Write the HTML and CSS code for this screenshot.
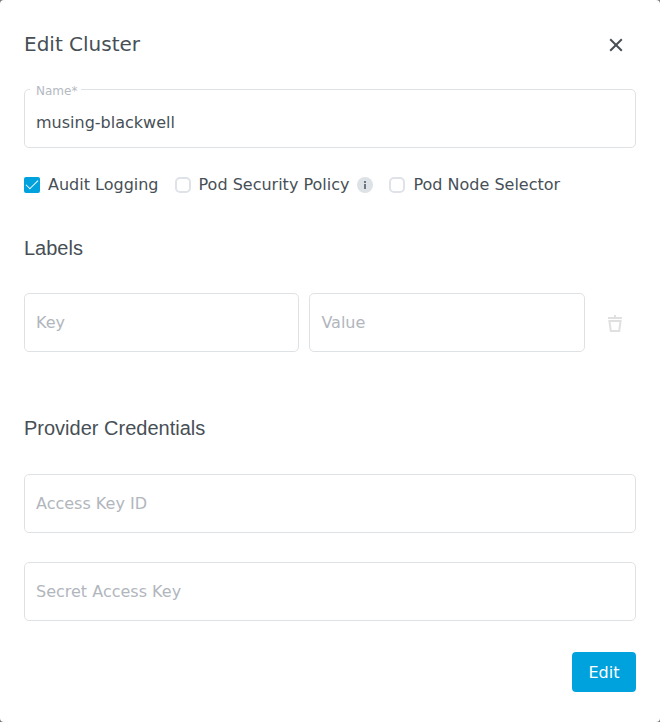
FILE: index.html
```html
<!DOCTYPE html>
<html lang="en">
<head>
<meta charset="utf-8">
<meta name="viewport" content="width=device-width, initial-scale=1">
<title>Edit Cluster</title>
<link rel="stylesheet" href="styles.css">
</head>
<body>
<main class="dialog" role="dialog" aria-labelledby="dialog-title">
  <header class="dialog-header">
    <h1 class="dialog-title" id="dialog-title">Edit Cluster</h1>
    <button class="icon-button" type="button" aria-label="Close">
      <svg class="icon-close" viewBox="0 0 14 14" aria-hidden="true"><path d="M1.2 1.2 12.8 12.8M12.8 1.2 1.2 12.8"/></svg>
    </button>
  </header>
  <form class="form">
    <div class="field">
      <label class="field-label" for="name">Name*</label>
      <input class="input" id="name" type="text" value="musing-blackwell" required>
    </div>

    <div class="options">
      <label class="option"><input class="checkbox" type="checkbox" checked>Audit Logging</label>
      <div class="option-group">
        <label class="option"><input class="checkbox" type="checkbox">Pod Security Policy</label>
        <svg class="icon-info" viewBox="0 0 16 16" aria-hidden="true"><circle cx="8" cy="8" r="8"/><path d="M7 4h2v2H7zM7 7h2v5H7z"/></svg>
      </div>
      <label class="option"><input class="checkbox" type="checkbox">Pod Node Selector</label>
    </div>

    <h2 class="section-title">Labels</h2>
    <div class="label-row">
      <input class="input" type="text" placeholder="Key" aria-label="Key">
      <input class="input" type="text" placeholder="Value" aria-label="Value">
      <button class="icon-button" type="button" aria-label="Delete label" disabled>
        <svg class="icon-trash" viewBox="0 -2 14 19" aria-hidden="true"><path class="lid" d="M0 2h6V0h2v2h6v2H0z"/><path class="bin" d="M1.4 6h11.2l-1.4 10H2.8z"/></svg>
      </button>
    </div>

    <h2 class="section-title credentials-title">Provider Credentials</h2>
    <div class="credentials">
      <input class="input" type="text" placeholder="Access Key ID" aria-label="Access Key ID">
      <input class="input" type="text" placeholder="Secret Access Key" aria-label="Secret Access Key">
    </div>

    <footer class="actions">
      <button class="primary" type="submit">Edit</button>
    </footer>
  </form>
</main>
</body>
</html>
```
FILE: styles.css
```css
* {
  box-sizing: border-box;
}

body {
  margin: 0;
  background: #757575;
  color: #474f56;
  font: 16px/24px "DejaVu Sans", sans-serif;
}

.dialog {
  min-height: 100vh;
  padding: 24px 24px 30px;
  border-radius: 4px;
  background: #fff;
}

.dialog-header {
  display: flex;
  align-items: flex-start;
  justify-content: space-between;
  height: 41px;
  margin-bottom: 24px;
}

.dialog-title,
.section-title {
  margin: 0;
  font-size: 20px;
  font-weight: 400;
  line-height: 24px;
}

.dialog-title {
  font-family: "DejaVu Sans", sans-serif;
  line-height: 40px;
}

.section-title {
  margin: 39px 0 33px;
  font-family: "Liberation Sans", sans-serif;
}

.icon-button {
  display: flex;
  align-items: center;
  justify-content: center;
  width: 40px;
  height: 42px;
  padding: 0;
  border: 0;
  background: none;
  color: inherit;
}

.icon-close {
  width: 14px;
  height: 14px;
  fill: none;
  stroke: currentColor;
  stroke-width: 2;
}

.icon-trash {
  width: 14px;
  height: 19px;
}

.lid {
  fill: #e0e0e0;
}

.bin {
  fill: none;
  stroke: #e0e0e0;
  stroke-width: 2;
}

.field {
  position: relative;
}

.field-label {
  position: absolute;
  top: -6px;
  left: 6px;
  padding: 0 4px 0 6px;
  background: #fff;
  color: #b4bac2;
  font-size: 12px;
  line-height: 16px;
}

.input {
  display: block;
  width: 100%;
  min-width: 0;
  height: 59px;
  padding: 0 11px;
  border: 1px solid #dfe2e4;
  border-radius: 5px;
  background: #fff;
  color: inherit;
  font: inherit;
}

.field .input {
  padding-top: 8px;
}

.input::placeholder {
  color: #b1b6bd;
  opacity: 1;
}

.options {
  display: flex;
  flex-wrap: wrap;
  gap: 16px;
  margin-top: 25px;
}

.option,
.option-group {
  display: flex;
  align-items: center;
  gap: 8px;
}

.checkbox {
  appearance: none;
  width: 16px;
  height: 16px;
  margin: 0;
  border: 2px solid #dfe3e8;
  border-radius: 5px;
  background: #fff;
}

.checkbox:checked {
  display: grid;
  place-items: center;
  border: 0;
  border-radius: 2px;
  background: #00a2dd;
}

.checkbox:checked::before {
  content: "";
  width: 11px;
  height: 5px;
  margin-bottom: 4px;
  border: solid #fff;
  border-width: 0 0 1px 1px;
  transform: rotate(-45deg);
}

.icon-info {
  width: 16px;
  height: 16px;
  fill: #dde2e6;
}

.icon-info path {
  fill: #6d7680;
}

.label-row {
  display: grid;
  grid-template-columns: 45% 45% 1fr;
  align-items: center;
  justify-items: center;
  column-gap: 10px;
}

.credentials-title {
  margin: 64px 0 34px;
}

.credentials {
  display: grid;
  gap: 29px;
}

.actions {
  display: flex;
  justify-content: flex-end;
  margin-top: 31px;
}

.primary {
  min-width: 64px;
  height: 40px;
  padding: 2px 16px 0;
  border: 0;
  border-radius: 4px;
  background: #00a2dd;
  color: #fff;
  font: inherit;
}
```
